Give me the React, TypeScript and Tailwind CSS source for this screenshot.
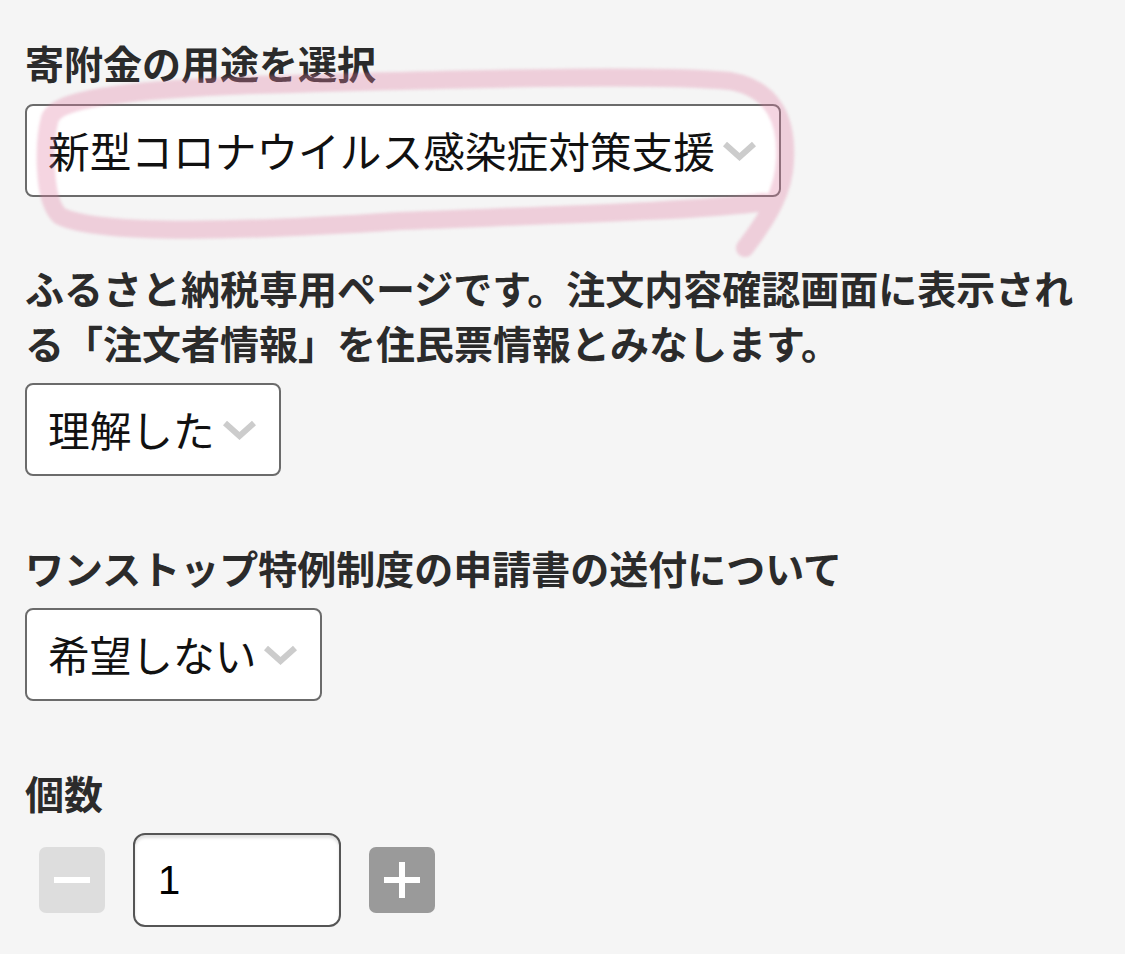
import React from 'react';

const jp = { fontFamily: '"Noto Sans CJK JP", "Noto Sans", sans-serif' };

function Chevron() {
  return (
    <svg width="35" height="21" viewBox="0 0 35 21" className="shrink-0" aria-hidden="true">
      <polyline points="3,4 17.5,17 32,4" fill="none" stroke="#cccccc" strokeWidth="6" />
    </svg>
  );
}

function SelectBox({ label }: { label: string }) {
  return (
    <div className="flex h-[93px] w-fit items-center gap-[7px] rounded-[8px] border-2 border-[#6b6b6b] bg-white pl-[21px] pr-[22px]">
      <span className="text-[41.7px] leading-none text-[#111]">{label}</span>
      <Chevron />
    </div>
  );
}

function Label({ children }: { children: React.ReactNode }) {
  return <div className="text-[39px] font-bold leading-[55px] text-[#2b2b2b]">{children}</div>;
}

export default function App() {
  return (
    <div className="relative min-h-[954px] w-[1125px] overflow-hidden bg-[#f5f5f5] px-[25px] pt-[35px]" style={jp}>
      <Label>寄附金の用途を選択</Label>
      <div className="mt-[14px]">
        <SelectBox label="新型コロナウイルス感染症対策支援" />
      </div>

      <div className="mt-[63px]">
        <Label>ふるさと納税専用ページです。注文内容確認画面に表示される「注文者情報」を住民票情報とみなします。</Label>
      </div>
      <div className="mt-[13px]">
        <SelectBox label="理解した" />
      </div>

      <div className="mt-[64px]">
        <Label>ワンストップ特例制度の申請書の送付について</Label>
      </div>
      <div className="mt-[13px]">
        <SelectBox label="希望しない" />
      </div>

      <div className="mt-[64px]">
        <Label>個数</Label>
      </div>
      <div className="mt-[13px] flex items-center gap-[28px] pl-[14px]">
        <button className="flex h-[66px] w-[66px] items-center justify-center rounded-[7px] bg-[#dddddd]">
          <span className="block h-[6px] w-[36px] bg-white" />
        </button>
        <div className="flex h-[94px] w-[208px] items-center rounded-[12px] border-2 border-[#555] bg-white pl-[23px] shadow-[inset_0_3px_3px_rgba(0,0,0,0.12)]">
          <span className="text-[40px] leading-none text-black" style={{ fontFamily: '"Liberation Sans", Arial, sans-serif' }}>1</span>
        </div>
        <button className="flex h-[66px] w-[66px] items-center justify-center rounded-[7px] bg-[#9a9a9a]">
          <svg width="36" height="36" viewBox="0 0 36 36" aria-hidden="true">
            <rect x="0" y="15" width="36" height="6" fill="#fff" />
            <rect x="15" y="0" width="6" height="36" fill="#fff" />
          </svg>
        </button>
      </div>

      {/* pink marker scribble over the first select */}
      <svg
        className="pointer-events-none absolute left-0 top-0 blur-[1.5px]"
        width="1125"
        height="300"
        viewBox="0 0 1125 300"
        aria-hidden="true"
      >
        <g opacity="0.32">
          <path
            d="M 764 202 C 700 211, 550 215, 400 221 C 250 231, 100 236, 60 216 C 42 200, 44 140, 50 118 C 60 96, 150 89, 250 85 C 450 79, 650 74, 730 81 C 775 89, 787 122, 785 160 C 784 190, 770 215, 745 248"
            fill="none"
            stroke="#e07ba2"
            strokeWidth="18"
            strokeLinecap="round"
            strokeLinejoin="round"
          />
        </g>
      </svg>
    </div>
  );
}
